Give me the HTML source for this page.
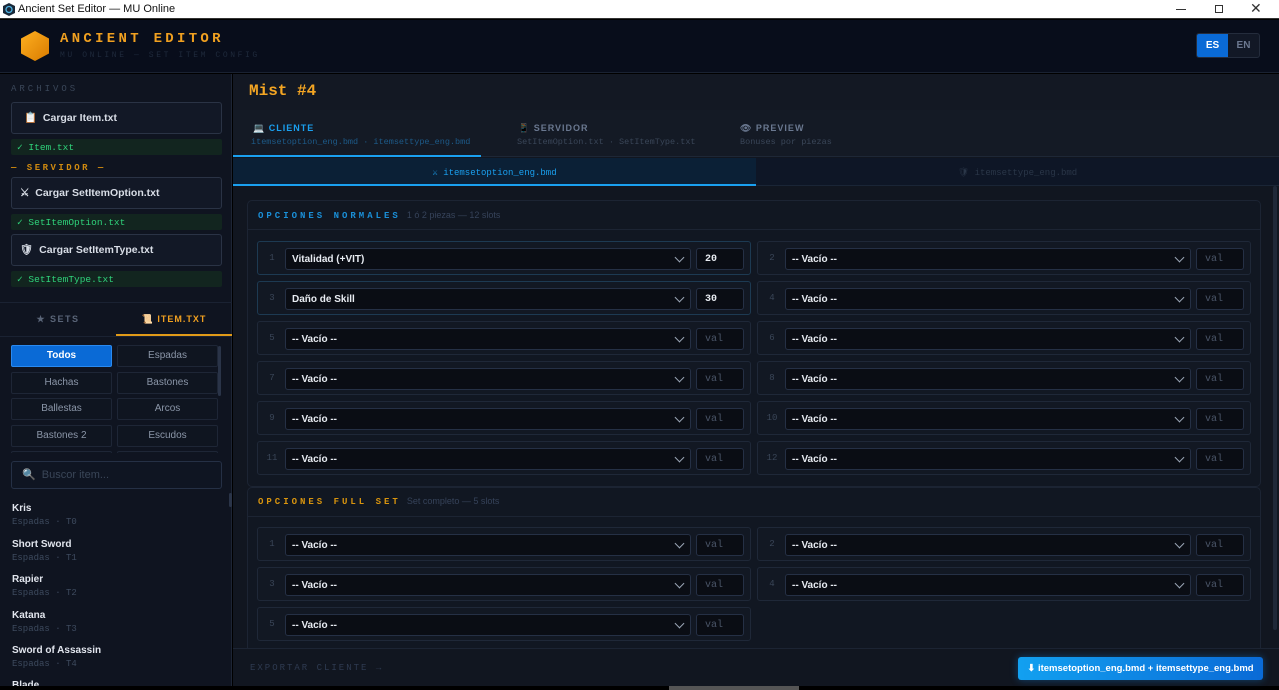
<!DOCTYPE html><html><head><meta charset="utf-8"><style>
*{box-sizing:border-box;margin:0;padding:0}
body{width:1279px;height:690px;overflow:hidden;background:#000;font-family:"Liberation Sans",sans-serif;position:relative}
.a{position:absolute}
.mono{font-family:"Liberation Mono","DejaVu Sans Mono",monospace}
.btn{position:absolute;left:11px;width:211px;height:32px;border:1px solid #2a3345;border-radius:3px;background:#121826;color:#d8dde6;font-size:10.5px;font-weight:bold;line-height:30px;padding-left:12px}
.ok{position:absolute;left:11px;width:211px;height:16px;background:#12251f;border-radius:2px;color:#2fd27a;font-size:9.5px;line-height:17px;padding-left:6px;font-family:"Liberation Mono",monospace}
.cat{position:absolute;width:101px;height:22px;border:1px solid #1e2636;border-radius:2px;background:#0f1520;color:#8b96a8;font-size:10px;text-align:center;line-height:20px}
.it{position:absolute;left:12px;font-size:10px;color:#e2e6ee;font-weight:bold}
.it span{display:block;font-weight:normal;color:#3d4a5e;font-family:"Liberation Mono",monospace;font-size:9px;margin-top:3px}
.row{position:absolute;width:494px;height:34px;border:1px solid #1f2838;border-radius:3px;background:#121823}
.row.hl{border-color:#1d3a52}
.row .n{position:absolute;left:0;width:28px;top:11px;text-align:center;font-size:9px;color:#3a4658;font-family:"Liberation Mono",monospace}
.row .s{position:absolute;left:27px;top:6px;width:406px;height:22px;border:1px solid #253045;border-radius:3px;background:#0a0d14;color:#e8ecf2;font-size:10px;font-weight:bold;line-height:21px;padding-left:6px}
.row .s:after{content:"";position:absolute;right:7px;top:5px;width:6px;height:6px;border-right:1.3px solid #9aa5b5;border-bottom:1.3px solid #9aa5b5;transform:rotate(45deg)}
.row .v{position:absolute;left:438px;top:6px;width:48px;height:22px;border:1px solid #253045;border-radius:3px;background:#0a0d14;color:#4a5568;font-size:10px;line-height:22px;padding-left:8px;font-family:"Liberation Mono",monospace}
.row .v.f{color:#e8ecf2;font-weight:bold}
.ph{position:absolute;font-family:"Liberation Mono",monospace;font-size:9px;font-weight:bold;letter-spacing:3px}
.ph span{font-family:"Liberation Sans",sans-serif;font-weight:normal;letter-spacing:0;color:#36435a;margin-left:6px}
</style></head><body>
<div class="a" style="left:0;top:0;width:1279px;height:19px;background:#fff;border-bottom:1px solid #333"></div>
<svg class="a" style="left:3px;top:3px" width="12" height="13" viewBox="0 0 12 13"><polygon points="6,0 12,3 12,10 6,13 0,10 0,3" fill="#1a2a3a"/><circle cx="6" cy="6.5" r="3" fill="none" stroke="#4fb0e0" stroke-width="1.3"/></svg>
<div class="a" style="left:18px;top:3px;font-size:11px;color:#111">Ancient Set Editor — MU Online</div>
<div class="a" style="left:1176px;top:9px;width:10px;height:1px;background:#333"></div>
<div class="a" style="left:1215px;top:5px;width:8px;height:8px;border:1px solid #333"></div>
<div class="a" style="left:1250px;top:0px;font-size:14px;color:#333">✕</div>
<div class="a" style="left:0;top:20px;width:1279px;height:53px;background:#080d1b;border-bottom:1px solid #1a2232"></div>
<svg class="a" style="left:19px;top:30px" width="32" height="32" viewBox="0 0 32 32"><defs><linearGradient id="g" x1="0" y1="0" x2="1" y2="1"><stop offset="0" stop-color="#ffb020"/><stop offset="1" stop-color="#d97b00"/></linearGradient></defs><polygon points="16,1 30,8.5 30,23.5 16,31 2,23.5 2,8.5" fill="url(#g)"/></svg>
<div class="a mono" style="left:60px;top:31px;font-size:14px;font-weight:bold;color:#f0a020;letter-spacing:3.3px">ANCIENT EDITOR</div>
<div class="a mono" style="left:60px;top:51px;font-size:8px;color:#1f2a3c;letter-spacing:2.6px">MU ONLINE — SET ITEM CONFIG</div>
<div class="a" style="left:1196px;top:33px;width:64px;height:25px;border:1px solid #242c3c;border-radius:3px;background:#121826"></div>
<div class="a" style="left:1197px;top:34px;width:31px;height:23px;background:#0a6ad6;border-radius:2px 0 0 2px;color:#fff;font-size:10px;font-weight:bold;text-align:center;line-height:23px">ES</div>
<div class="a" style="left:1228px;top:34px;width:31px;height:23px;color:#6c7890;font-size:10px;font-weight:bold;text-align:center;line-height:23px">EN</div>
<div class="a" style="left:0;top:74px;width:232px;height:612px;background:#0f1420;border-right:1px solid #1d2535"></div>
<div class="a mono" style="left:11px;top:84px;font-size:9px;color:#3a4658;letter-spacing:3px">ARCHIVOS</div>
<div class="btn" style="top:102px">📋&nbsp; Cargar Item.txt</div>
<div class="ok" style="top:139px">✓ Item.txt</div>
<div class="a mono" style="left:11px;top:163px;font-size:9px;font-weight:bold;color:#d08a10;letter-spacing:2.5px">— SERVIDOR —</div>
<div class="btn" style="top:177px;padding-left:8px">⚔&nbsp; Cargar SetItemOption.txt</div>
<div class="ok" style="top:214px">✓ SetItemOption.txt</div>
<div class="btn" style="top:234px;padding-left:8px">🛡&nbsp; Cargar SetItemType.txt</div>
<div class="ok" style="top:271px">✓ SetItemType.txt</div>
<div class="a" style="left:0;top:302px;width:232px;height:1px;background:#1a2232"></div>
<div class="a" style="left:0;top:303px;width:116px;height:33px;text-align:center;line-height:32px;font-size:9px;font-weight:bold;color:#5a6578;letter-spacing:1.5px">★ SETS</div>
<div class="a" style="left:116px;top:303px;width:116px;height:33px;text-align:center;line-height:32px;font-size:9px;font-weight:bold;color:#f0a020;letter-spacing:1px;border-bottom:2px solid #e09a18">📜 ITEM.TXT</div>
<div class="a" style="left:0;top:336px;width:231px;height:1px;background:#1a2232"></div>
<div class="a" style="left:0;top:344px;width:232px;height:109px;overflow:hidden">
<div class="cat" style="left:11px;top:1px;background:#0a6ad6;border-color:#2a8af0;color:#fff;font-weight:bold">Todos</div>
<div class="cat" style="left:117px;top:1px">Espadas</div>
<div class="cat" style="left:11px;top:28px">Hachas</div>
<div class="cat" style="left:117px;top:28px">Bastones</div>
<div class="cat" style="left:11px;top:54px">Ballestas</div>
<div class="cat" style="left:117px;top:54px">Arcos</div>
<div class="cat" style="left:11px;top:81px">Bastones 2</div>
<div class="cat" style="left:117px;top:81px">Escudos</div>
<div class="cat" style="left:11px;top:107px"></div><div class="cat" style="left:117px;top:107px"></div>
<div class="a" style="left:218px;top:2px;width:3px;height:50px;background:#2a3448;border-radius:2px"></div>
</div>
<div class="a" style="left:11px;top:461px;width:211px;height:28px;border:1px solid #253045;border-radius:3px;background:#0f1522;color:#3a4658;font-size:11px;line-height:26px;padding-left:10px">🔍&nbsp; Buscor item...</div>
<div class="a" style="left:229px;top:493px;width:3px;height:14px;background:#2a3448;border-radius:2px"></div>
<div class="it" style="top:503px">Kris<span>Espadas · T0</span></div>
<div class="it" style="top:539px">Short Sword<span>Espadas · T1</span></div>
<div class="it" style="top:574px">Rapier<span>Espadas · T2</span></div>
<div class="it" style="top:610px">Katana<span>Espadas · T3</span></div>
<div class="it" style="top:645px">Sword of Assassin<span>Espadas · T4</span></div>
<div class="a" style="left:0;top:680px;width:232px;height:6px;overflow:hidden"><div class="it" style="top:0;left:12px">Blade</div></div>
<div class="a" style="left:233px;top:74px;width:1046px;height:612px;background:#111620"></div>
<div class="a" style="left:233px;top:74px;width:1046px;height:36px;background:#131823"></div>
<div class="a mono" style="left:249px;top:82px;font-size:16px;font-weight:bold;color:#f5a623">Mist #4</div>
<div class="a" style="left:233px;top:110px;width:1046px;height:47px;background:#141a25;border-bottom:1px solid #1e2736"></div>
<div class="a" style="left:253px;top:123px;font-size:9px;font-weight:bold;color:#1aa0f0;letter-spacing:1px">💻 CLIENTE</div>
<div class="a mono" style="left:251px;top:137px;font-size:8.5px;color:#1d5a88">itemsetoption_eng.bmd · itemsettype_eng.bmd</div>
<div class="a" style="left:233px;top:155px;width:248px;height:2px;background:#1aa0f0"></div>
<div class="a" style="left:518px;top:123px;font-size:9px;font-weight:bold;color:#6a7890;letter-spacing:1px">📱 SERVIDOR</div>
<div class="a mono" style="left:517px;top:137px;font-size:8.5px;color:#3a4658">SetItemOption.txt · SetItemType.txt</div>
<div class="a" style="left:740px;top:123px;font-size:9px;font-weight:bold;color:#6a7890;letter-spacing:1px">👁 PREVIEW</div>
<div class="a mono" style="left:740px;top:137px;font-size:8.5px;color:#3a4658">Bonuses por piezas</div>
<div class="a" style="left:233px;top:158px;width:523px;height:28px;background:#0b2036;border-bottom:2px solid #1aa0f0;text-align:center;line-height:28px;font-size:9px;color:#1aa0f0"><span class="mono">⚔ itemsetoption_eng.bmd</span></div>
<div class="a" style="left:756px;top:158px;width:523px;height:28px;background:#0e1626;border-bottom:1px solid #1a2536;text-align:center;line-height:28px;font-size:9px;color:#2a3648"><span class="mono">🛡 itemsettype_eng.bmd</span></div>
<div class="a" style="left:1273px;top:186px;width:4px;height:444px;background:#1f2838;border-radius:2px"></div>
<div class="a" style="left:247px;top:200px;width:1014px;height:287px;border:1px solid #1c2433;border-radius:5px;background:#111722"></div>
<div class="a" style="left:248px;top:229px;width:1012px;height:1px;background:#1c2433"></div>
<div class="ph" style="left:258px;top:210px;color:#1a8fd8">OPCIONES NORMALES<span>1 ó 2 piezas — 12 slots</span></div>
<div class="row hl" style="left:257px;top:241px"><div class="n">1</div><div class="s">Vitalidad (+VIT)</div><div class="v f">20</div></div>
<div class="row" style="left:757px;top:241px"><div class="n">2</div><div class="s">-- Vacío --</div><div class="v">val</div></div>
<div class="row hl" style="left:257px;top:281px"><div class="n">3</div><div class="s">Daño de Skill</div><div class="v f">30</div></div>
<div class="row" style="left:757px;top:281px"><div class="n">4</div><div class="s">-- Vacío --</div><div class="v">val</div></div>
<div class="row" style="left:257px;top:321px"><div class="n">5</div><div class="s">-- Vacío --</div><div class="v">val</div></div>
<div class="row" style="left:757px;top:321px"><div class="n">6</div><div class="s">-- Vacío --</div><div class="v">val</div></div>
<div class="row" style="left:257px;top:361px"><div class="n">7</div><div class="s">-- Vacío --</div><div class="v">val</div></div>
<div class="row" style="left:757px;top:361px"><div class="n">8</div><div class="s">-- Vacío --</div><div class="v">val</div></div>
<div class="row" style="left:257px;top:401px"><div class="n">9</div><div class="s">-- Vacío --</div><div class="v">val</div></div>
<div class="row" style="left:757px;top:401px"><div class="n">10</div><div class="s">-- Vacío --</div><div class="v">val</div></div>
<div class="row" style="left:257px;top:441px"><div class="n">11</div><div class="s">-- Vacío --</div><div class="v">val</div></div>
<div class="row" style="left:757px;top:441px"><div class="n">12</div><div class="s">-- Vacío --</div><div class="v">val</div></div>
<div class="a" style="left:247px;top:487px;width:1014px;height:170px;border:1px solid #1c2433;border-radius:5px;background:#111722"></div>
<div class="a" style="left:248px;top:516px;width:1012px;height:1px;background:#1c2433"></div>
<div class="ph" style="left:258px;top:496px;color:#d8940e">OPCIONES FULL SET<span>Set completo — 5 slots</span></div>
<div class="row" style="left:257px;top:527px"><div class="n">1</div><div class="s">-- Vacío --</div><div class="v">val</div></div>
<div class="row" style="left:757px;top:527px"><div class="n">2</div><div class="s">-- Vacío --</div><div class="v">val</div></div>
<div class="row" style="left:257px;top:567px"><div class="n">3</div><div class="s">-- Vacío --</div><div class="v">val</div></div>
<div class="row" style="left:757px;top:567px"><div class="n">4</div><div class="s">-- Vacío --</div><div class="v">val</div></div>
<div class="row" style="left:257px;top:607px"><div class="n">5</div><div class="s">-- Vacío --</div><div class="v">val</div></div>
<div class="a" style="left:233px;top:648px;width:1046px;height:38px;background:#111620;border-top:1px solid #1c2433"></div>
<div class="a mono" style="left:250px;top:663px;font-size:9px;color:#2e3a50;letter-spacing:2px">EXPORTAR CLIENTE →</div>
<div class="a" style="left:1018px;top:657px;width:245px;height:23px;border-radius:3px;background:linear-gradient(90deg,#12a0f0,#0a6ad6);box-shadow:0 0 8px rgba(20,140,240,.4);color:#fff;font-size:9.5px;font-weight:bold;text-align:center;line-height:23px">⬇ itemsetoption_eng.bmd + itemsettype_eng.bmd</div>
<div class="a" style="left:669px;top:686px;width:130px;height:4px;background:#555"></div>
</body></html>
